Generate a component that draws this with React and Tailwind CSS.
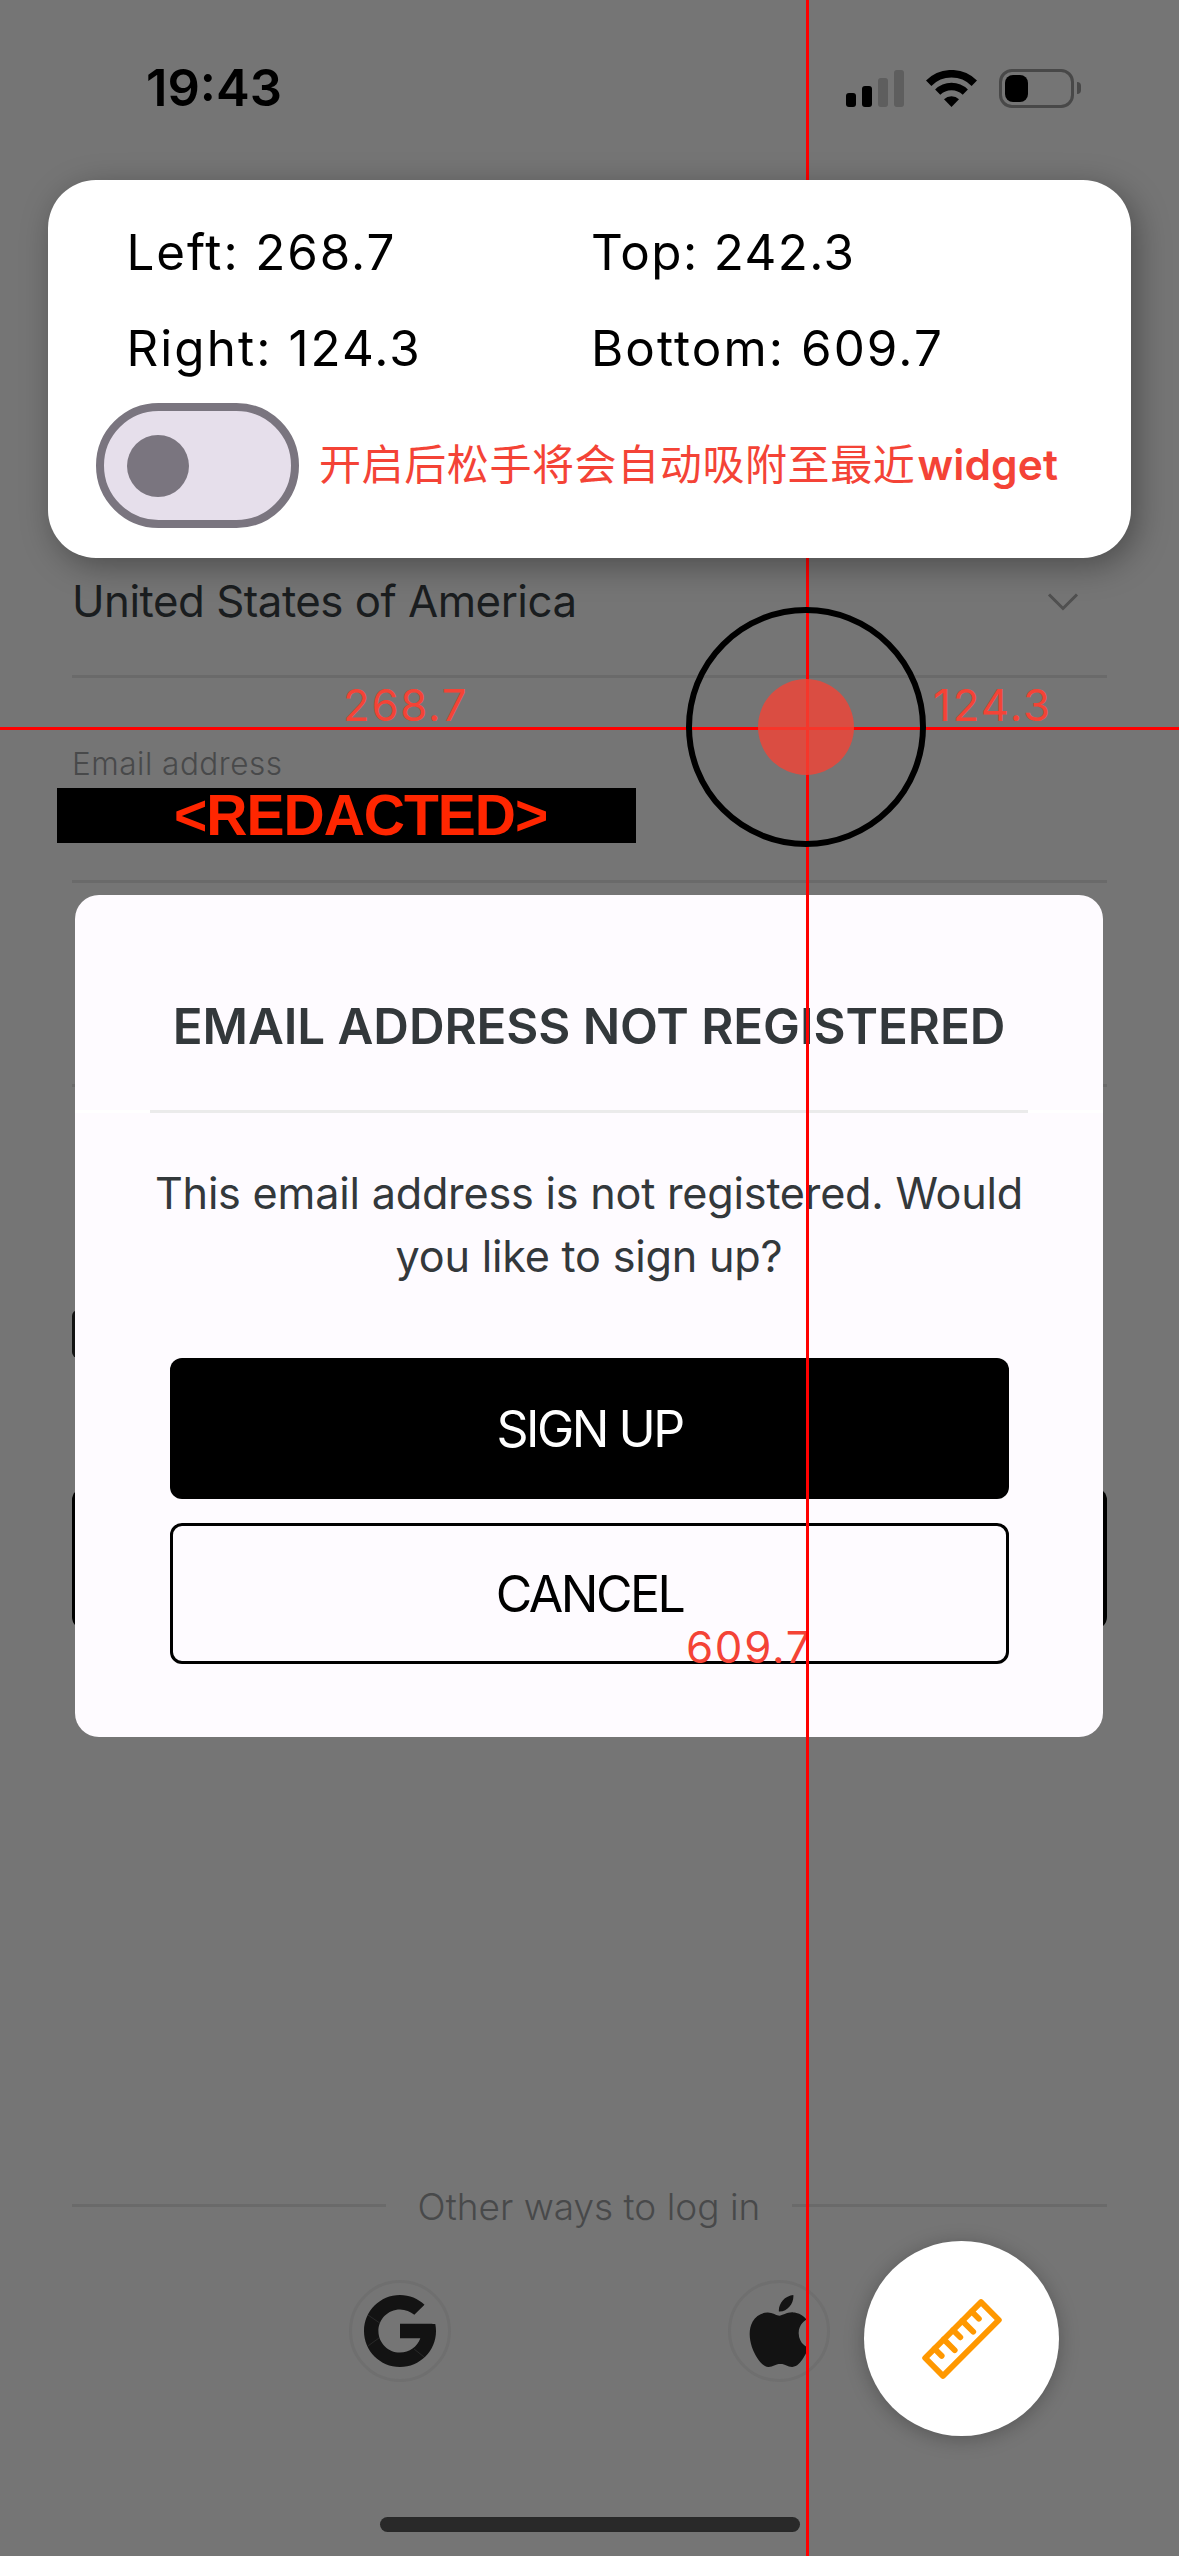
import React from 'react';
import { SiApple } from 'react-icons/si';

function StatusBar() {
  return (
    <header className="flex h-44 items-center pl-[146px] pr-[98px] text-black">
      <span className="w-[700px] text-[50.7px] leading-none font-semibold">19:43</span>
      <div className="flex shrink-0 items-center">
        <div className="flex h-[37px] items-end gap-1.5">
          <span className="h-3.5 w-2.5 rounded-[3px] bg-black" />
          <span className="h-[21px] w-2.5 rounded-[3px] bg-black" />
          <span className="h-[29px] w-2.5 rounded-[3px] bg-[#5e5e5e]" />
          <span className="h-[37px] w-2.5 rounded-[3px] bg-[#5e5e5e]" />
        </div>
        <svg className="ml-[22px] h-[37px] w-[51px]" viewBox="0 0 51 37" fill="none" stroke="#000">
          <path d="M2.7 13.2A32.2 32.2 0 0 1 48.3 13.2" strokeWidth="7.6" />
          <path d="M11.7 22.2A19.5 19.5 0 0 1 39.3 22.2" strokeWidth="7.3" />
          <path d="M25.5 37 18 29.2a10.8 10.8 0 0 1 15 0Z" fill="#000" stroke="none" />
        </svg>
        <div className="ml-[22px] flex h-[39px] w-[75px] items-center rounded-[13px] border-3 border-[#484848] pl-[3px]">
          <span className="h-[27px] w-[23px] rounded-lg bg-black" />
        </div>
        <span className="ml-[3px] h-3 w-1 rounded-r-full bg-[#484848]" />
      </div>
    </header>
  );
}

function GoogleLogo() {
  return (
    <svg className="size-[72px]" viewBox="4 4 40 40">
      <path
        fill="#131313"
        d="M43.611 20.083H42V20H24v8h11.303c-1.649 4.657-6.08 8-11.303 8-6.627 0-12-5.373-12-12s5.373-12 12-12c3.059 0 5.842 1.154 7.961 3.039l5.657-5.657C34.046 6.053 29.268 4 24 4 12.955 4 4 12.955 4 24s8.955 20 20 20 20-8.955 20-20c0-1.341-.138-2.65-.389-3.917z"
      />
      <path d="M6.2 15.1 12.8 19.6M6.2 32.3 12.3 27.9M31.8 34 37.3 38.4" stroke="#757575" strokeWidth="0.25" opacity="0.5" />
    </svg>
  );
}

function LoginPage() {
  return (
    <main className="flex flex-col px-18 pt-[387px]">
      <div className="flex h-[76px] items-center justify-between pt-0.5 pr-7">
        <span className="text-[43.8px] leading-none tracking-[-0.5px] text-[#1a1d1f]">United States of America</span>
        <svg className="h-[18px] w-8" viewBox="0 0 32 18" fill="none" stroke="#505050" strokeWidth="3">
          <path d="M2 1.500 16 15.500 30 1.500" />
        </svg>
      </div>
      <hr className="mt-9 h-[3px] border-0 bg-[#6a6a6a]" />
      <label className="mt-[67px] h-[37px] text-[31.5px] leading-[38px] font-light tracking-[0.5px] text-[#48494a]">
        Email address
      </label>
      <div className="mt-1.5 -ml-[15px] flex h-[55px] w-[579px] items-center bg-black pl-[117px] font-['Liberation_Sans',Arial,sans-serif] text-[57px] leading-none font-bold tracking-[-1px] text-[#ff2600]">
        &lt;REDACTED&gt;
      </div>
      <hr className="mt-[37px] h-[3px] border-0 bg-[#6a6a6a]" />
      <hr className="mt-[201px] h-[3px] border-0 bg-[#6a6a6a]" />
      <span className="mt-[223px] size-12 rounded-md bg-[#131313]" />
      <div className="mt-[130px] h-[141px] rounded-xl bg-black" />

      <div className="mt-[553px] flex h-[46px] items-center justify-between">
        <span className="h-[3px] w-[314px] bg-[#6a6a6a]" />
        <span className="pt-0.5 text-[37px] leading-none font-light text-[#48494a]">Other ways to log in</span>
        <span className="h-[3px] w-[315px] bg-[#6a6a6a]" />
      </div>
      <div className="mt-[52px] flex justify-center gap-[277px]">
        <span className="flex size-[102px] items-center justify-center rounded-full border-3 border-[#6f6f6f]">
          <GoogleLogo />
        </span>
        <span className="flex size-[102px] items-center justify-center rounded-full border-3 border-[#6f6f6f]">
          <SiApple className="size-[72px] text-[#131313]" />
        </span>
      </div>
      <span className="mt-[135px] ml-[308px] h-[15px] w-[420px] rounded-full bg-[#292929]" />
    </main>
  );
}

function Dialog() {
  return (
    <section className="absolute top-[894.500px] left-[75px] flex h-[842px] w-[1028px] flex-col rounded-3xl bg-[#fefbff] pt-[98px] text-center text-[#33383b]">
      <h1 className="h-[66px] text-[49.3px] leading-[66px] font-semibold tracking-[-0.06px] whitespace-nowrap">
        EMAIL ADDRESS NOT REGISTERED
      </h1>
      <div className="mt-[51px] bg-white px-[75px]">
        <hr className="h-[3px] border-0 bg-[#ebebeb]" />
      </div>
      <p className="mt-[49px] px-[60px] text-[43.2px] leading-[63px] tracking-[-0.22px]">
        This email address is not registered. Would
        <br />
        you like to sign up?
      </p>
      <div className="mr-[94px] ml-[95px] mt-[70px] flex flex-col gap-6 text-[50px] tracking-[-2.5px]">
        <button className="h-[141px] rounded-xl bg-black pt-0.5 text-white">SIGN UP</button>
        <button className="h-[141px] rounded-xl border-3 border-black pt-0.5 text-black">CANCEL</button>
      </div>
    </section>
  );
}

function Crosshair() {
  return (
    <div className="absolute inset-0 text-[43.8px] leading-none tracking-[1.7px] text-[#f44336]">
      <span className="absolute top-[684px] left-[343px]">268.7</span>
      <span className="absolute top-[684px] left-[933px] tracking-[2px]">124.3</span>
      <span className="absolute top-[1626px] left-[686px]">609.7</span>
      <span className="absolute top-[727px] left-0 h-[3px] w-full bg-[#ff0000]" />
      <span className="absolute top-0 left-[806px] h-full w-[3px] bg-[#ff0000]" />
      <span className="absolute top-[607px] left-[686px] flex size-60 items-center justify-center rounded-full border-6 border-black">
        <span className="size-24 rounded-full bg-[#f44336]/80" />
      </span>
    </div>
  );
}

function MeasurePanel() {
  return (
    <aside className="absolute top-[180px] left-12 h-[378px] w-[1083px] rounded-[48px] bg-white pt-6 text-black shadow-[6px_8px_32px_rgba(0,0,0,0.34)]">
      <div className="grid grid-cols-[464.500px_1fr] pl-[78.500px] text-[49.3px] leading-[96px] tracking-[2.1px]">
        <span className="tracking-[1.9px]">Left: 268.7</span>
        <span className="tracking-[1.4px]">Top: 242.3</span>
        <span>Right: 124.3</span>
        <span>Bottom: 609.7</span>
      </div>
      <div className="mt-[7px] flex items-center pl-12">
        <span className="flex h-[125px] w-[203px] shrink-0 items-center rounded-full border-8 border-[#7a757f] bg-[#e6dfeb] pl-[23px]">
          <span className="size-[62px] rounded-full bg-[#7a757f]" />
        </span>
        <p className="-mt-0.5 ml-5 text-[42.5px] leading-[60px] whitespace-nowrap text-[#f44336]">
          <span className="font-['Noto_Sans_CJK_SC',sans-serif] text-[42px] leading-none tracking-[0.6px]">
            开启后松手将会自动吸附至最近
          </span>
          <span className="ml-0.5 font-semibold tracking-[0.1px]">widget</span>
        </p>
      </div>
    </aside>
  );
}

function RulerButton() {
  return (
    <button className="absolute top-[2241px] left-[864px] flex size-[195px] items-center justify-center rounded-full bg-white shadow-[0_3px_20px_rgba(0,0,0,0.26)]">
      <svg className="size-[84px]" viewBox="-42 -42 84 84" fill="none" stroke="#ff9800" strokeWidth="5.8" strokeLinecap="round" strokeLinejoin="round">
        <g transform="rotate(-45)">
          <rect x="-39.500" y="-12.600" width="79" height="25.200" />
          <path d="M-26.300 -12.600V-2.400M-13.100 -12.600V2.800M0 -12.600V-2.400M13.100 -12.600V2.800M26.300 -12.600V-2.400" />
        </g>
      </svg>
    </button>
  );
}

export default function App() {
  return (
    <div className="relative h-[2556px] w-[1179px] overflow-hidden bg-[#757575] font-['Inter','Noto_Sans_CJK_SC',sans-serif]">
      <StatusBar />
      <LoginPage />
      <Dialog />
      <Crosshair />
      <MeasurePanel />
      <RulerButton />
    </div>
  );
}
